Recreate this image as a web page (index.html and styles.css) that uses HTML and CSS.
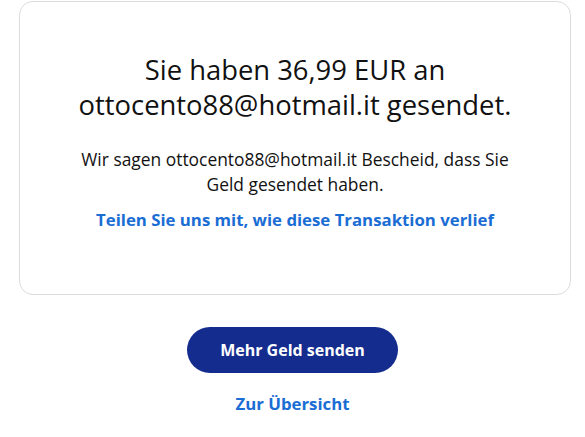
FILE: index.html
```html
<!DOCTYPE html>
<html lang="de">
<head>
<meta charset="utf-8">
<link rel="stylesheet" href="styles.css">
</head>
<body>
<main class="page">
  <section class="card">
    <h1 class="title">Sie haben 36,99 EUR an<br>ottocento88@hotmail.it gesendet.</h1>
    <p class="note">Wir sagen ottocento88@hotmail.it Bescheid, dass Sie<br>Geld gesendet haben.</p>
    <a class="link feedback" href="#">Teilen Sie uns mit, wie diese Transaktion verlief</a>
  </section>
  <div class="actions">
    <button class="primary">Mehr Geld senden</button>
    <a class="link overview" href="#">Zur Übersicht</a>
  </div>
</main>
</body>
</html>
```

FILE: styles.css
```css
* { box-sizing: border-box; }
html, body { margin: 0; padding: 0; background: #fff; }
body {
  font-family: "Open Sans", "Liberation Sans", sans-serif;
  color: #111;
  width: 585px;
  height: 437px;
  overflow: hidden;
}
.page {
  display: flex;
  flex-direction: column;
  align-items: center;
  padding-top: 1px;
}
.card {
  width: 552px;
  height: 294px;
  margin-left: 5px;
  border: 1px solid #dcdcdc;
  border-radius: 14px;
  display: flex;
  flex-direction: column;
  align-items: center;
  padding-top: 50px;
}
.title {
  margin: 0;
  font-weight: 400;
  font-size: 27.4px;
  line-height: 35px;
  text-align: center;
  color: #111;
  white-space: nowrap;
}
.note {
  margin: 25px 0 0;
  font-size: 17.4px;
  line-height: 25px;
  text-align: center;
  white-space: nowrap;
}
.link {
  color: #1a6dd4;
  font-weight: 700;
  font-size: 16.8px;
  line-height: 23px;
  text-decoration: none;
  white-space: nowrap;
}
.feedback { margin-top: 11px; }
.actions {
  display: flex;
  flex-direction: column;
  align-items: center;
  margin-top: 32px;
  gap: 19px;
}
.primary {
  width: 211px;
  height: 46px;
  border: none;
  border-radius: 23px;
  background: #142c8e;
  color: #fff;
  font-family: inherit;
  font-weight: 700;
  font-size: 16px;
}
```
